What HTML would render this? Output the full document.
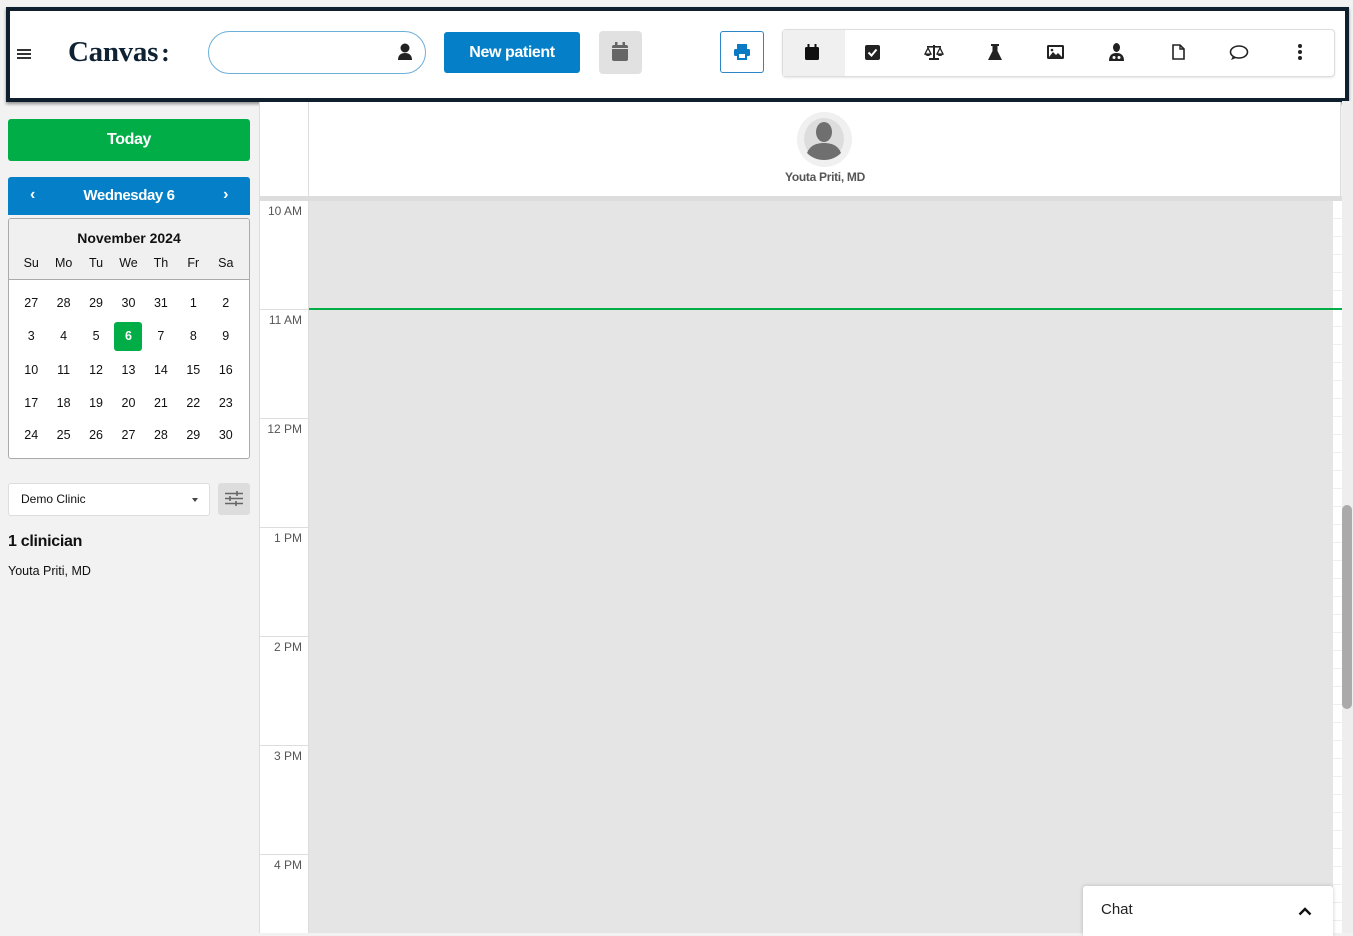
<!DOCTYPE html>
<html><head><meta charset="utf-8"><style>
*{box-sizing:border-box;margin:0;padding:0}
body{width:1353px;height:933px;overflow:hidden;background:#f2f2f2;font-family:"Liberation Sans",sans-serif;position:relative;color:#111}
.abs{position:absolute}
.hdr{left:6px;top:7px;width:1343px;height:95px;border:4px solid #0f1f2e;background:#fff;box-shadow:0 2px 3px rgba(0,0,0,.4)}
table.cal{table-layout:fixed;width:227px;border-collapse:collapse;font-size:12.5px;text-align:center}
table.cal td{padding:0}
</style></head><body>
<div class="abs hdr">
  <div class="abs" style="left:7px;top:38px;width:14px;height:2px;background:#333;box-shadow:0 4px 0 #333,0 8px 0 #333"></div>
  <div class="abs" style="left:58px;top:25px;font-family:'Liberation Serif',serif;font-weight:bold;font-size:29px;color:#0f2233;letter-spacing:-0.3px">Canvas<span style="font-size:26px;margin-left:3px">:</span></div>
  <div class="abs" style="left:198px;top:20px;width:218px;height:43px;border:1px solid #6bb0d9;border-radius:22px"></div>
  <svg class="abs" style="left:387px;top:32px" width="16" height="18" viewBox="0 0 16 18"><circle cx="8" cy="5" r="4.5" fill="#222"/><path d="M1 17c0-5 3-7 7-7s7 2 7 7z" fill="#222"/></svg>
  <div class="abs" style="left:434px;top:21px;width:136px;height:41px;background:#0580c8;border-radius:3px;color:#fff;font-weight:bold;font-size:16px;text-align:center;line-height:41px;letter-spacing:-0.4px">New patient</div>
  <div class="abs" style="left:589px;top:20px;width:43px;height:43px;background:#e1e1e1;border-radius:4px"></div>
  <svg class="abs" style="left:601px;top:31px" width="18" height="20" viewBox="0 0 18 20"><rect x="1" y="3" width="16" height="16" rx="2" fill="#666"/><rect x="4" y="0" width="2.5" height="5" fill="#666"/><rect x="11.5" y="0" width="2.5" height="5" fill="#666"/><rect x="1" y="6" width="16" height="1" fill="#e1e1e1"/></svg>
  <div class="abs" style="left:710px;top:20px;width:44px;height:42px;border:1px solid #2c86c7;border-radius:3px"></div>
  <svg class="abs" style="left:724px;top:33px" width="16" height="16" viewBox="0 0 16 16"><rect x="3" y="0" width="10" height="5" fill="#0a7ac4"/><rect x="0" y="5" width="16" height="7" rx="1.5" fill="#0a7ac4"/><rect x="3" y="9" width="10" height="7" fill="#0a7ac4"/><rect x="5" y="10" width="6" height="4" fill="#fff"/></svg>
  <div class="abs" style="left:772px;top:18px;width:553px;height:48px;border:1px solid #ddd;border-radius:4px;background:#fff;box-shadow:0 1px 2px rgba(0,0,0,.1)"></div>
  <div class="abs" style="left:773px;top:19px;width:62px;height:46px;background:#f0f0f0"></div>
  <svg class="abs" style="left:795px;top:33px" width="14" height="16" viewBox="0 0 14 16"><rect x="0" y="3" width="14" height="13" rx="1.5" fill="#111"/><rect x="2.5" y="0" width="2" height="4" fill="#111"/><rect x="9.5" y="0" width="2" height="4" fill="#111"/></svg>
  <svg class="abs" style="left:855px;top:34px" width="15" height="15" viewBox="0 0 15 15"><rect width="15" height="15" rx="2" fill="#222"/><path d="M3.5 7.5l3 3 5-6" stroke="#fff" stroke-width="2" fill="none"/></svg>
  <svg class="abs" style="left:914px;top:33px" width="20" height="16" viewBox="0 0 20 16"><rect x="9" y="1" width="2" height="13" fill="#222"/><rect x="3" y="2" width="14" height="1.6" fill="#222"/><rect x="5" y="14" width="10" height="2" fill="#222"/><path d="M4 4l-3 6h6zM16 4l-3 6h6z" stroke="#222" stroke-width="1.3" fill="none"/><path d="M1 10a3 2 0 0 0 6 0zM13 10a3 2 0 0 0 6 0z" fill="#222"/></svg>
  <svg class="abs" style="left:978px;top:33px" width="14" height="17" viewBox="0 0 14 17"><rect x="3" y="0" width="8" height="2" fill="#222"/><path d="M4.5 2v5L0 16h14L9.5 7V2z" fill="#222"/></svg>
  <svg class="abs" style="left:1037px;top:34px" width="17" height="14" viewBox="0 0 17 14"><rect width="17" height="14" rx="1.5" fill="#222"/><rect x="2" y="2" width="13" height="10" fill="#fff"/><path d="M2 12l4-5 3 3 2-2 4 4z" fill="#222"/><circle cx="5" cy="5" r="1.3" fill="#222"/></svg>
  <svg class="abs" style="left:1099px;top:32px" width="15" height="18" viewBox="0 0 15 18"><ellipse cx="7.5" cy="4.5" rx="3.5" ry="4.5" fill="#222"/><path d="M0 18c0-6 3-8 7.5-8s7.5 2 7.5 8z" fill="#222"/><circle cx="5" cy="14.5" r="1.5" fill="#fff"/><circle cx="10" cy="14.5" r="1.5" fill="#fff"/></svg>
  <svg class="abs" style="left:1162px;top:33px" width="13" height="16" viewBox="0 0 13 16"><path d="M1 1h7l4 4v10H1z" stroke="#222" stroke-width="1.6" fill="none"/><path d="M8 1v4h4" stroke="#222" stroke-width="1.4" fill="none"/></svg>
  <svg class="abs" style="left:1219px;top:34px" width="20" height="16" viewBox="0 0 20 16"><ellipse cx="10" cy="7" rx="8.5" ry="6" stroke="#222" stroke-width="1.6" fill="none"/><path d="M4 11l-2 4 5-2" fill="#222"/></svg>
  <div class="abs" style="left:1288px;top:33px;width:4px;height:4px;border-radius:50%;background:#222;box-shadow:0 6px 0 #222,0 12px 0 #222"></div>
</div>

<div class="abs" style="left:8px;top:119px;width:242px;height:42px;background:#00ad47;border-radius:3px;color:#fff;font-weight:bold;font-size:16px;text-align:center;line-height:42px;letter-spacing:-0.4px">Today</div>
<div class="abs" style="left:8px;top:177px;width:242px;height:38px;background:#0580c8;border-radius:3px 3px 0 0;color:#fff;font-weight:bold;font-size:15px;text-align:center;line-height:38px;letter-spacing:-0.4px">Wednesday 6
<span class="abs" style="left:22px;top:-1px;font-size:16px">‹</span><span class="abs" style="right:22px;top:-1px;font-size:16px">›</span></div>
<div class="abs" style="left:8px;top:218px;width:242px;height:241px;border:1px solid #aaa;border-radius:3px;background:#fff;overflow:hidden">
  <div style="background:#f0f0f0;height:61px;border-bottom:1px solid #aaa;position:relative">
    <div style="font-weight:bold;font-size:14px;padding-top:11px;text-align:center">November 2024</div>
    <table class="cal" style="position:absolute;left:6px;top:37px"><tr>
    <td>Su</td><td>Mo</td><td>Tu</td><td>We</td><td>Th</td><td>Fr</td><td>Sa</td></tr></table>
  </div>
  <table class="cal" style="margin:6px 0 0 6px">
  <tr style="height:33px"><td>27</td><td>28</td><td>29</td><td>30</td><td>31</td><td>1</td><td>2</td></tr>
  <tr style="height:34px"><td>3</td><td>4</td><td>5</td><td><span style="display:inline-block;width:28px;height:29px;line-height:29px;background:#00ad47;color:#fff;font-weight:bold;border-radius:3px">6</span></td><td>7</td><td>8</td><td>9</td></tr>
  <tr style="height:33px"><td>10</td><td>11</td><td>12</td><td>13</td><td>14</td><td>15</td><td>16</td></tr>
  <tr style="height:33px"><td>17</td><td>18</td><td>19</td><td>20</td><td>21</td><td>22</td><td>23</td></tr>
  <tr style="height:32px"><td>24</td><td>25</td><td>26</td><td>27</td><td>28</td><td>29</td><td>30</td></tr>
  </table>
</div>
<div class="abs" style="left:8px;top:483px;width:202px;height:33px;background:#fff;border:1px solid #ddd;border-radius:3px;font-size:12px;line-height:31px;padding-left:12px">Demo Clinic<span class="abs" style="right:11px;top:14px;border:3.5px solid transparent;border-top:4px solid #444"></span></div>
<div class="abs" style="left:218px;top:483px;width:32px;height:32px;background:#ddd;border-radius:3px"></div>
<svg class="abs" style="left:225px;top:491px" width="18" height="15" viewBox="0 0 18 15"><path d="M0 2.5h18M0 7.5h18M0 12.5h18" stroke="#666" stroke-width="1.6"/><path d="M12 0v5M5 5v5M11 10v5" stroke="#666" stroke-width="1.6"/></svg>
<div class="abs" style="left:8px;top:533px;font-weight:bold;font-size:16px;letter-spacing:-0.3px">1 clinician</div>
<div class="abs" style="left:8px;top:564px;font-size:12.5px">Youta Priti, MD</div>

<div class="abs" style="left:259px;top:102px;width:50px;height:831px;background:#fff;border-left:1px solid #ddd;border-right:1px solid #ddd"></div>
<div class="abs" style="left:309px;top:102px;width:1032px;height:95px;background:#fff;border-right:1px solid #ddd"></div>
<div class="abs" style="left:260px;top:196px;width:1082px;height:5px;background:#ddd"></div>
<div class="abs" style="left:309px;top:201px;width:1024px;height:732px;background:#e5e5e5"></div>
<div class="abs" style="left:1333px;top:201px;width:9px;height:732px;background:#fff;background-image:repeating-linear-gradient(to bottom,transparent 0 17px,#eee 17px 18px)"></div>
<div class="abs" style="left:1342px;top:101px;width:11px;height:832px;background:#eee"></div>
<div class="abs" style="left:1342px;top:505px;width:10px;height:204px;background:#aaa;border-radius:5px"></div>
<div class="abs" style="left:309px;top:308px;width:1033px;height:2px;background:#00ad47"></div>
<div class="abs" style="left:797px;top:112px;width:55px;height:55px;border-radius:50%;background:#f0f0f0"></div>
<svg class="abs" style="left:802px;top:117px" width="44" height="44" viewBox="0 0 44 44"><ellipse cx="22" cy="22" rx="20" ry="21" fill="#ddd"/><ellipse cx="22" cy="15" rx="8" ry="10" fill="#6f6f6f"/><path d="M5 36c3-8 10-10 17-10s14 2 17 10c-5 5-11 7-17 7s-12-2-17-7z" fill="#6f6f6f"/></svg>
<div class="abs" style="left:760px;top:170px;width:130px;text-align:center;font-size:12px;font-weight:bold;color:#555;letter-spacing:-0.3px">Youta Priti, MD</div>
<div style="position:absolute;left:260px;top:201px;width:48px;font-size:12px;color:#555;text-align:right">
  <div class="abs" style="right:6px;top:3px;white-space:nowrap">10 AM</div>
  <div class="abs" style="left:0;top:108px;width:49px;height:1px;background:#ddd"></div>
  <div class="abs" style="right:6px;top:112px;white-space:nowrap">11 AM</div>
  <div class="abs" style="left:0;top:217px;width:49px;height:1px;background:#ddd"></div>
  <div class="abs" style="right:6px;top:221px;white-space:nowrap">12 PM</div>
  <div class="abs" style="left:0;top:326px;width:49px;height:1px;background:#ddd"></div>
  <div class="abs" style="right:6px;top:330px;white-space:nowrap">1 PM</div>
  <div class="abs" style="left:0;top:435px;width:49px;height:1px;background:#ddd"></div>
  <div class="abs" style="right:6px;top:439px;white-space:nowrap">2 PM</div>
  <div class="abs" style="left:0;top:544px;width:49px;height:1px;background:#ddd"></div>
  <div class="abs" style="right:6px;top:548px;white-space:nowrap">3 PM</div>
  <div class="abs" style="left:0;top:653px;width:49px;height:1px;background:#ddd"></div>
  <div class="abs" style="right:6px;top:657px;white-space:nowrap">4 PM</div>
</div>
<div class="abs" style="left:1083px;top:886px;width:250px;height:50px;background:#fff;box-shadow:0 0 4px rgba(0,0,0,.2);border-radius:3px 3px 0 0">
  <div class="abs" style="left:18px;top:15px;font-size:15px;color:#222">Chat</div>
  <svg class="abs" style="left:215px;top:21px" width="14" height="9" viewBox="0 0 14 9"><path d="M1.5 7.5L7 2l5.5 5.5" stroke="#111" stroke-width="2.4" fill="none"/></svg>
</div>
</body></html>
